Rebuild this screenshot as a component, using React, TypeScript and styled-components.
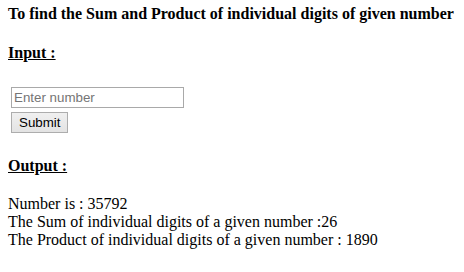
import styled, { createGlobalStyle } from "styled-components";

const GlobalStyle = createGlobalStyle`
  html, body {
    margin: 0;
    padding: 0;
    background: #ffffff;
  }
`;

const Page = styled.div`
  padding: 5px 8px 0 8px;
  font-family: "Liberation Serif", "Times New Roman", serif;
  font-size: 16px;
  line-height: 18px;
  color: #000000;
`;

const Title = styled.div`
  font-weight: 700;
  white-space: nowrap;
`;

const Heading = styled.div<{ $gap: number }>`
  margin-top: ${(p) => p.$gap}px;
  font-weight: 700;
  text-decoration: underline;
`;

const Form = styled.form`
  display: flex;
  flex-direction: column;
  align-items: flex-start;
  gap: 4px;
  margin: 25px 0 0 3px;
`;

const NumberInput = styled.input`
  box-sizing: border-box;
  width: 173px;
  height: 21px;
  margin: 0;
  padding: 1px 2px;
  border: 1px solid #a9a9a9;
  border-radius: 0;
  font-family: "Liberation Sans", Arial, sans-serif;
  font-size: 13.33px;
  color: #000000;
  outline: none;

  &::placeholder {
    color: #757575;
  }
`;

const SubmitButton = styled.button`
  box-sizing: border-box;
  height: 21px;
  margin: 0;
  padding: 1px 7px;
  border: 1px solid #adadad;
  border-radius: 0;
  background: linear-gradient(#f0f0f0, #e3e3e3);
  font-family: "Liberation Sans", Arial, sans-serif;
  font-size: 13.33px;
  color: #000000;
`;

const Results = styled.div`
  margin-top: 20px;
`;

const ResultLine = styled.div`
  white-space: nowrap;
`;

const App = () => {
  const value = 35792;
  const digits = String(value).split("").map(Number);
  const sum = digits.reduce((a, b) => a + b, 0);
  const product = digits.reduce((a, b) => a * b, 1);

  return (
    <>
      <GlobalStyle />
      <Page>
        <Title>To find the Sum and Product of individual digits of given number</Title>
        <Heading $gap={21}>Input :</Heading>
        <Form onSubmit={(e) => e.preventDefault()}>
          <NumberInput type="text" placeholder="Enter number" />
          <SubmitButton type="submit">Submit</SubmitButton>
        </Form>
        <Heading $gap={24}>Output :</Heading>
        <Results>
          <ResultLine>Number is : {value}</ResultLine>
          <ResultLine>The Sum of individual digits of a given number :{sum}</ResultLine>
          <ResultLine>The Product of individual digits of a given number : {product}</ResultLine>
        </Results>
      </Page>
    </>
  );
};

export default App;
